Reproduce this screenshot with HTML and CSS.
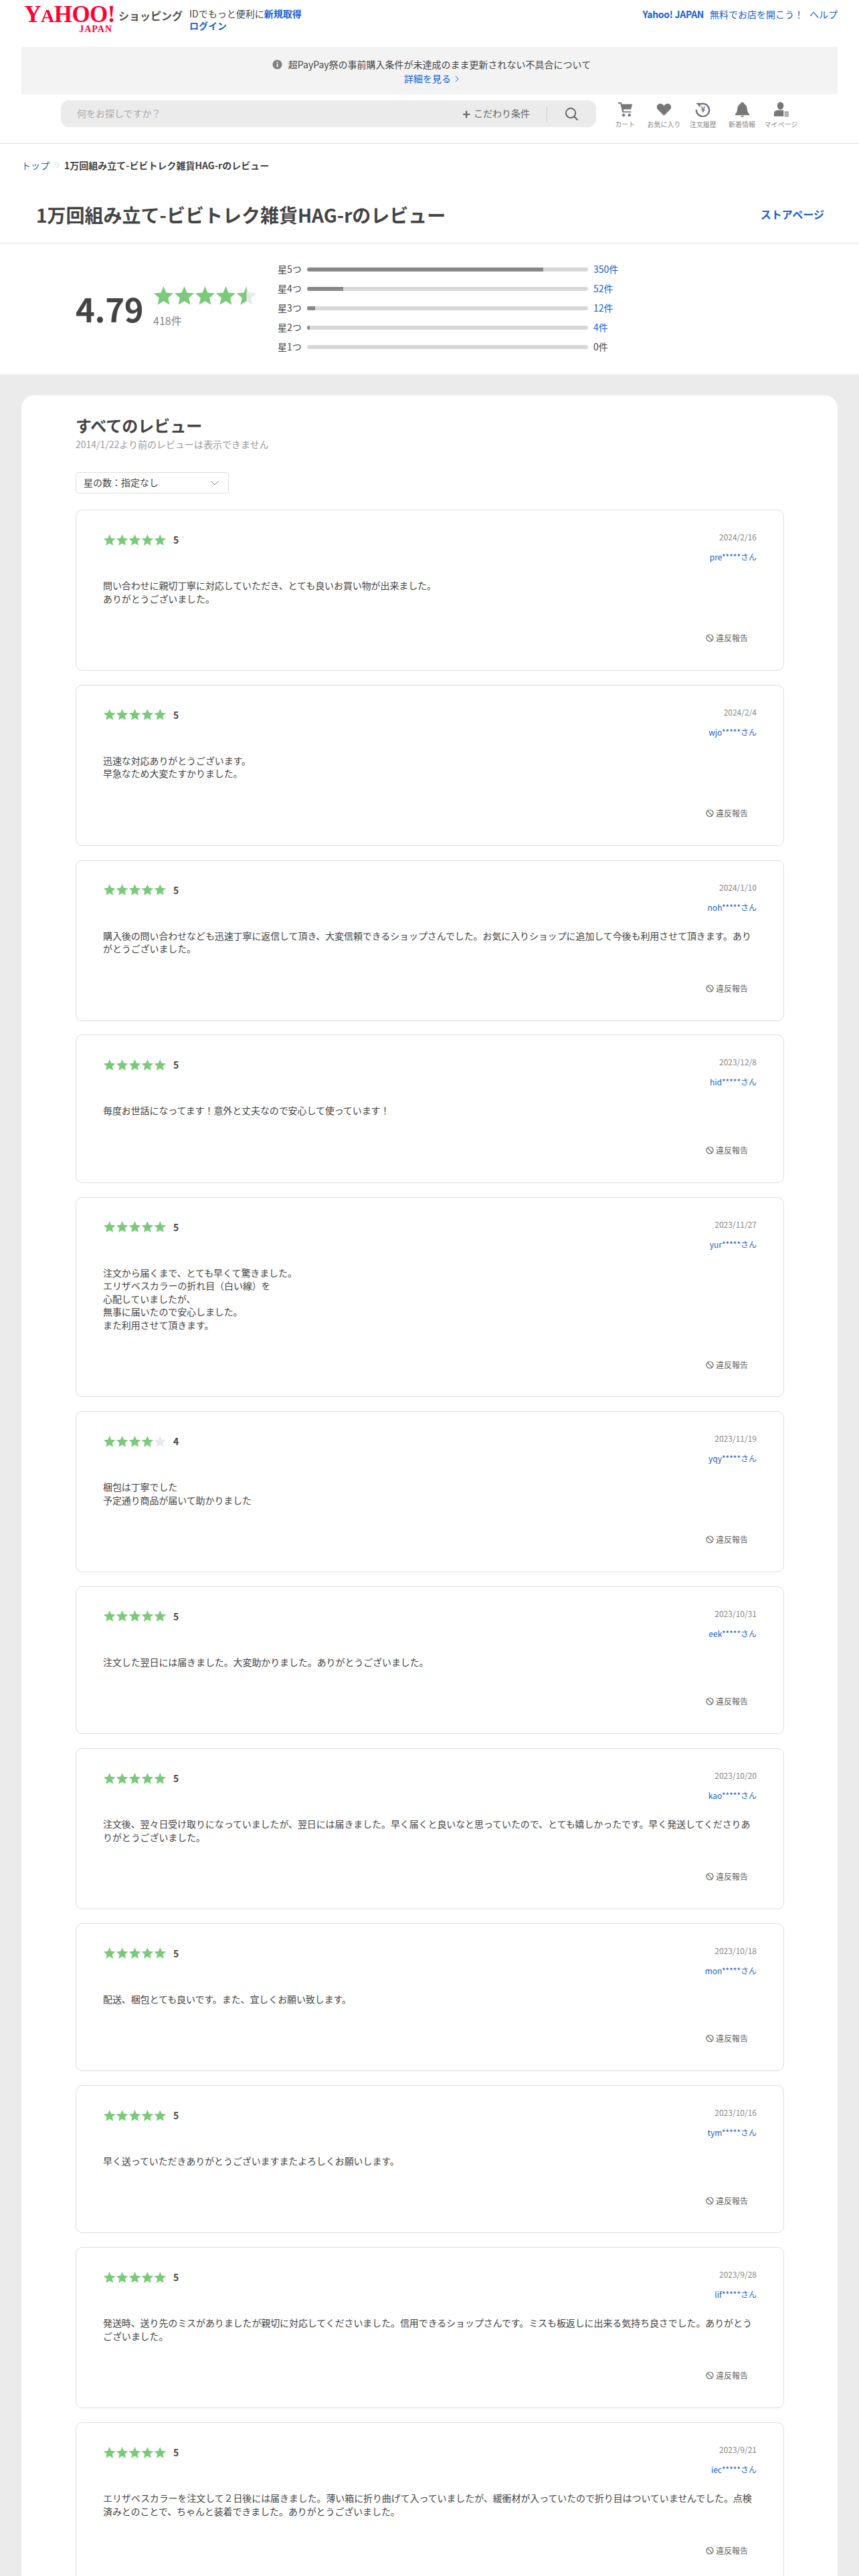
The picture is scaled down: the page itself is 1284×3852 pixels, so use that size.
FILE: index.html
```html
<!DOCTYPE html>
<html lang="ja">
<head>
    <meta charset="UTF-8">
    <title>1万回組み立て-ビビトレク雑貨HAG-rのレビュー</title>
    <link rel="stylesheet" href="styles.css">
</head>
<body>

<svg class="defs" aria-hidden="true">
    <symbol id="stars-5" viewBox="0 0 100 18">
        <path class="star-on" d="M10 0 12.6 6.2 19.4 6.8 14.3 11.2 15.8 17.8 10 14.3 4.2 17.8 5.7 11.2 .6 6.8 7.4 6.2Z"/>
        <path class="star-on" d="M30 0 32.6 6.2 39.4 6.8 34.3 11.2 35.8 17.8 30 14.3 24.2 17.8 25.7 11.2 20.6 6.8 27.4 6.2Z"/>
        <path class="star-on" d="M50 0 52.6 6.2 59.4 6.8 54.3 11.2 55.8 17.8 50 14.3 44.2 17.8 45.7 11.2 40.6 6.8 47.4 6.2Z"/>
        <path class="star-on" d="M70 0 72.6 6.2 79.4 6.8 74.3 11.2 75.8 17.8 70 14.3 64.2 17.8 65.7 11.2 60.6 6.8 67.4 6.2Z"/>
        <path class="star-on" d="M90 0 92.6 6.2 99.4 6.8 94.3 11.2 95.8 17.8 90 14.3 84.2 17.8 85.7 11.2 80.6 6.8 87.4 6.2Z"/>
    </symbol>
    <symbol id="stars-4" viewBox="0 0 100 18">
        <path class="star-on" d="M10 0 12.6 6.2 19.4 6.8 14.3 11.2 15.8 17.8 10 14.3 4.2 17.8 5.7 11.2 .6 6.8 7.4 6.2Z"/>
        <path class="star-on" d="M30 0 32.6 6.2 39.4 6.8 34.3 11.2 35.8 17.8 30 14.3 24.2 17.8 25.7 11.2 20.6 6.8 27.4 6.2Z"/>
        <path class="star-on" d="M50 0 52.6 6.2 59.4 6.8 54.3 11.2 55.8 17.8 50 14.3 44.2 17.8 45.7 11.2 40.6 6.8 47.4 6.2Z"/>
        <path class="star-on" d="M70 0 72.6 6.2 79.4 6.8 74.3 11.2 75.8 17.8 70 14.3 64.2 17.8 65.7 11.2 60.6 6.8 67.4 6.2Z"/>
        <path class="star-off" d="M90 0 92.6 6.2 99.4 6.8 94.3 11.2 95.8 17.8 90 14.3 84.2 17.8 85.7 11.2 80.6 6.8 87.4 6.2Z"/>
    </symbol>
    <symbol id="stars-half" viewBox="0 0 100 18">
        <path class="star-on" d="M10 0 12.6 6.2 19.4 6.8 14.3 11.2 15.8 17.8 10 14.3 4.2 17.8 5.7 11.2 .6 6.8 7.4 6.2Z"/>
        <path class="star-on" d="M30 0 32.6 6.2 39.4 6.8 34.3 11.2 35.8 17.8 30 14.3 24.2 17.8 25.7 11.2 20.6 6.8 27.4 6.2Z"/>
        <path class="star-on" d="M50 0 52.6 6.2 59.4 6.8 54.3 11.2 55.8 17.8 50 14.3 44.2 17.8 45.7 11.2 40.6 6.8 47.4 6.2Z"/>
        <path class="star-on" d="M70 0 72.6 6.2 79.4 6.8 74.3 11.2 75.8 17.8 70 14.3 64.2 17.8 65.7 11.2 60.6 6.8 67.4 6.2Z"/>
        <path class="star-off" d="M90 0 92.6 6.2 99.4 6.8 94.3 11.2 95.8 17.8 90 14.3 84.2 17.8 85.7 11.2 80.6 6.8 87.4 6.2Z"/>
        <path class="star-on" d="M90 0V14.3L84.2 17.8 85.7 11.2 80.6 6.8 87.4 6.2Z"/>
    </symbol>
    <symbol id="ban" viewBox="0 0 12 12">
        <circle cx="6" cy="6" r="5" fill="none" stroke="#666" stroke-width="1.2"/>
        <path d="M2.6 2.4 9.4 9.6" stroke="#666" stroke-width="1.2"/>
    </symbol>
</svg>

<div class="page">

<header class="site-header">
    <div class="top-row">
        <a class="logo">
            <span class="logo-yahoo">Y<small>A</small>HOO!</span>
            <span class="logo-japan">JAPAN</span>
        </a>
        <span class="logo-service">ショッピング</span>
        <div class="login-box">
            <div>IDでもっと便利に<a class="strong-link">新規取得</a></div>
            <div><a class="strong-link">ログイン</a></div>
        </div>
        <nav class="top-links">
            <a class="strong-link">Yahoo! JAPAN</a>
            <a>無料でお店を開こう！</a>
            <a>ヘルプ</a>
        </nav>
    </div>

    <div class="notice">
        <div class="notice-line">
            <svg class="notice-icon" viewBox="0 0 16 16"><circle cx="8" cy="8" r="7.5" fill="#808080"/><rect x="7" y="7" width="2.2" height="5" fill="#f3f3f3"/><rect x="7" y="3.8" width="2.2" height="2" fill="#f3f3f3"/></svg>
            超PayPay祭の事前購入条件が未達成のまま更新されない不具合について
        </div>
        <a class="notice-link">詳細を見る<svg class="chevron" viewBox="0 0 6 10"><path d="M1 1 5 5 1 9" fill="none" stroke="#1660cf"/></svg></a>
    </div>

    <div class="search-row">
        <div class="search-box">
            <span class="search-placeholder">何をお探しですか？</span>
            <span class="search-more"><b class="plus">+</b>こだわり条件</span>
            <span class="search-sep"></span>
            <svg class="search-icon" viewBox="0 0 22 22"><circle cx="9.5" cy="9.5" r="7.5" fill="none" stroke="#555" stroke-width="1.8"/><path d="M15 15 20.5 20.5" stroke="#555" stroke-width="2"/></svg>
        </div>
        <ul class="user-nav">
            <li>
                <svg viewBox="0 0 24 24"><path d="M1 1H6L7 4H23L21 12H9L9.6 15H21V17H7.6L4.6 3H1Z" fill="#777"/><path d="M7 5H22.5L20.6 11.5H8.4Z" fill="#777"/><circle cx="9.5" cy="21" r="2.3" fill="#777"/><circle cx="18.5" cy="21" r="2.3" fill="#777"/></svg>
                カート
            </li>
            <li>
                <svg viewBox="0 0 24 24"><path d="M12 22 2.4 12.2C-.6 8.8 1 3 6.2 3 8.8 3 10.8 4.4 12 6.4 13.2 4.4 15.2 3 17.8 3 23 3 24.6 8.8 21.6 12.2Z" fill="#777"/></svg>
                お気に入り
            </li>
            <li>
                <svg viewBox="0 0 24 24"><path d="M5.4 5.6A10 10 0 1 1 2 12.5" fill="none" stroke="#777" stroke-width="2.6"/><path d="M1.5 2.2 8.5 2 7.8 8.8Z" fill="#777"/><text x="12.4" y="17" class="yen-mark">¥</text></svg>
                注文履歴
            </li>
            <li>
                <svg viewBox="0 0 24 24"><path d="M12 1C14 1 15 2.2 15.3 3.8 18.4 5 19.4 8 19.6 11.5 19.8 15 20.8 17.4 23 19.4V21H1V19.4C3.2 17.4 4.2 15 4.4 11.5 4.6 8 5.6 5 8.7 3.8 9 2.2 10 1 12 1Z" fill="#777"/><path d="M9.8 22H14.2C14 23.2 13.2 24 12 24 10.8 24 10 23.2 9.8 22Z" fill="#777"/></svg>
                新着情報
            </li>
            <li>
                <svg viewBox="0 0 24 24"><ellipse cx="11" cy="6.5" rx="5" ry="6" fill="#777"/><path d="M1 23V18C1 15 4 13.6 7 13.4H15C15.8 13.5 16 14 16 14.6V23Z" fill="#777"/><rect x="17.5" y="15.5" width="6.5" height="1.7" fill="#777"/><rect x="17.5" y="18.5" width="6.5" height="1.7" fill="#777"/><rect x="17.5" y="21.5" width="6.5" height="1.7" fill="#777"/></svg>
                マイページ
            </li>
        </ul>
    </div>
</header>

<div class="breadcrumb">
    <a>トップ</a>
    <svg class="crumb-sep" viewBox="0 0 6 12"><path d="M.5 1 5.5 6 .5 11" fill="none" stroke="#ccc"/></svg>
    <b>1万回組み立て-ビビトレク雑貨HAG-rのレビュー</b>
</div>

<div class="title-row">
    <h1>1万回組み立て-ビビトレク雑貨HAG-rのレビュー</h1>
    <a class="store-link">ストアページ</a>
</div>

<section class="summary">
    <div class="score">4.79</div>
    <div class="score-side">
        <svg class="stars-big"><use href="#stars-half"/></svg>
        <div class="score-count">418件</div>
    </div>
    <div class="bars">
        <div class="bar-row"><span class="bar-label">星5つ</span><div class="bar-track"><div class="bar-fill" style="width: 84%"></div></div><a class="bar-count">350件</a></div>
        <div class="bar-row"><span class="bar-label">星4つ</span><div class="bar-track"><div class="bar-fill" style="width: 12.9%"></div></div><a class="bar-count">52件</a></div>
        <div class="bar-row"><span class="bar-label">星3つ</span><div class="bar-track"><div class="bar-fill" style="width: 2.9%"></div></div><a class="bar-count">12件</a></div>
        <div class="bar-row"><span class="bar-label">星2つ</span><div class="bar-track"><div class="bar-fill" style="width: 1%"></div></div><a class="bar-count">4件</a></div>
        <div class="bar-row"><span class="bar-label">星1つ</span><div class="bar-track"></div><span class="bar-count zero">0件</span></div>
    </div>
</section>

<main class="reviews-bg">
    <div class="reviews-panel">
        <h2>すべてのレビュー</h2>
        <p class="reviews-note">2014/1/22より前のレビューは表示できません</p>
        <div class="star-select">
            星の数：指定なし
            <svg viewBox="0 0 12 7"><path d="M.5 .5 6 6 11.5 .5" fill="none" stroke="#777"/></svg>
        </div>

        <div class="review-list">
            <article class="review">
                <div class="review-head">
                    <div class="review-rate"><svg class="stars-small"><use href="#stars-5"/></svg><b>5</b></div>
                    <div class="review-meta"><div class="review-date">2024/2/16</div><a class="review-user">pre*****さん</a></div>
                </div>
                <p class="review-text">問い合わせに親切丁寧に対応していただき、とても良いお買い物が出来ました。<br>ありがとうございました。</p>
                <a class="report"><svg><use href="#ban"/></svg>違反報告</a>
            </article>

            <article class="review">
                <div class="review-head">
                    <div class="review-rate"><svg class="stars-small"><use href="#stars-5"/></svg><b>5</b></div>
                    <div class="review-meta"><div class="review-date">2024/2/4</div><a class="review-user">wjo*****さん</a></div>
                </div>
                <p class="review-text">迅速な対応ありがとうございます。<br>早急なため大変たすかりました。</p>
                <a class="report"><svg><use href="#ban"/></svg>違反報告</a>
            </article>

            <article class="review">
                <div class="review-head">
                    <div class="review-rate"><svg class="stars-small"><use href="#stars-5"/></svg><b>5</b></div>
                    <div class="review-meta"><div class="review-date">2024/1/10</div><a class="review-user">noh*****さん</a></div>
                </div>
                <p class="review-text">購入後の問い合わせなども迅速丁寧に返信して頂き、大変信頼できるショップさんでした。お気に入りショップに追加して今後も利用させて頂きます。ありがとうございました。</p>
                <a class="report"><svg><use href="#ban"/></svg>違反報告</a>
            </article>

            <article class="review">
                <div class="review-head">
                    <div class="review-rate"><svg class="stars-small"><use href="#stars-5"/></svg><b>5</b></div>
                    <div class="review-meta"><div class="review-date">2023/12/8</div><a class="review-user">hid*****さん</a></div>
                </div>
                <p class="review-text">毎度お世話になってます！意外と丈夫なので安心して使っています！</p>
                <a class="report"><svg><use href="#ban"/></svg>違反報告</a>
            </article>

            <article class="review">
                <div class="review-head">
                    <div class="review-rate"><svg class="stars-small"><use href="#stars-5"/></svg><b>5</b></div>
                    <div class="review-meta"><div class="review-date">2023/11/27</div><a class="review-user">yur*****さん</a></div>
                </div>
                <p class="review-text">注文から届くまで、とても早くて驚きました。<br>エリザベスカラーの折れ目（白い線）を<br>心配していましたが、<br>無事に届いたので安心しました。<br>また利用させて頂きます。</p>
                <a class="report"><svg><use href="#ban"/></svg>違反報告</a>
            </article>

            <article class="review">
                <div class="review-head">
                    <div class="review-rate"><svg class="stars-small"><use href="#stars-4"/></svg><b>4</b></div>
                    <div class="review-meta"><div class="review-date">2023/11/19</div><a class="review-user">yqy*****さん</a></div>
                </div>
                <p class="review-text">梱包は丁寧でした<br>予定通り商品が届いて助かりました</p>
                <a class="report"><svg><use href="#ban"/></svg>違反報告</a>
            </article>

            <article class="review">
                <div class="review-head">
                    <div class="review-rate"><svg class="stars-small"><use href="#stars-5"/></svg><b>5</b></div>
                    <div class="review-meta"><div class="review-date">2023/10/31</div><a class="review-user">eek*****さん</a></div>
                </div>
                <p class="review-text">注文した翌日には届きました。大変助かりました。ありがとうございました。</p>
                <a class="report"><svg><use href="#ban"/></svg>違反報告</a>
            </article>

            <article class="review">
                <div class="review-head">
                    <div class="review-rate"><svg class="stars-small"><use href="#stars-5"/></svg><b>5</b></div>
                    <div class="review-meta"><div class="review-date">2023/10/20</div><a class="review-user">kao*****さん</a></div>
                </div>
                <p class="review-text">注文後、翌々日受け取りになっていましたが、翌日には届きました。早く届くと良いなと思っていたので、とても嬉しかったです。早く発送してくださりありがとうございました。</p>
                <a class="report"><svg><use href="#ban"/></svg>違反報告</a>
            </article>

            <article class="review">
                <div class="review-head">
                    <div class="review-rate"><svg class="stars-small"><use href="#stars-5"/></svg><b>5</b></div>
                    <div class="review-meta"><div class="review-date">2023/10/18</div><a class="review-user">mon*****さん</a></div>
                </div>
                <p class="review-text">配送、梱包とても良いです。また、宜しくお願い致します。</p>
                <a class="report"><svg><use href="#ban"/></svg>違反報告</a>
            </article>

            <article class="review">
                <div class="review-head">
                    <div class="review-rate"><svg class="stars-small"><use href="#stars-5"/></svg><b>5</b></div>
                    <div class="review-meta"><div class="review-date">2023/10/16</div><a class="review-user">tym*****さん</a></div>
                </div>
                <p class="review-text">早く送っていただきありがとうございますまたよろしくお願いします。</p>
                <a class="report"><svg><use href="#ban"/></svg>違反報告</a>
            </article>

            <article class="review">
                <div class="review-head">
                    <div class="review-rate"><svg class="stars-small"><use href="#stars-5"/></svg><b>5</b></div>
                    <div class="review-meta"><div class="review-date">2023/9/28</div><a class="review-user">lif*****さん</a></div>
                </div>
                <p class="review-text">発送時、送り先のミスがありましたが親切に対応してくださいました。信用できるショップさんです。ミスも板返しに出来る気持ち良さでした。ありがとうございました。</p>
                <a class="report"><svg><use href="#ban"/></svg>違反報告</a>
            </article>

            <article class="review">
                <div class="review-head">
                    <div class="review-rate"><svg class="stars-small"><use href="#stars-5"/></svg><b>5</b></div>
                    <div class="review-meta"><div class="review-date">2023/9/21</div><a class="review-user">iec*****さん</a></div>
                </div>
                <p class="review-text">エリザベスカラーを注文して２日後には届きました。薄い箱に折り曲げて入っていましたが、緩衝材が入っていたので折り目はついていませんでした。点検済みとのことで、ちゃんと装着できました。ありがとうございました。</p>
                <a class="report"><svg><use href="#ban"/></svg>違反報告</a>
            </article>
        </div>
    </div>
</main>

</div>

</body>
</html>
```

FILE: styles.css
```css
body {
    font-family: "Noto Sans CJK JP", "Noto Sans", sans-serif;
    font-size: 14px;
    line-height: 1.4;
    margin: 0;
    color: #444;
    background-color: #fff;
}
a {
    color: #1660cf;
}
h1, h2, p, ul {
    margin: 0;
    padding: 0;
}
.defs {
    display: block;
    width: 0;
    height: 0;
}
.star-on {
    fill: #7bc97b;
}
.star-off {
    fill: #e8e8e8;
}
.page {
    height: 3852px;
    overflow: hidden;
}

/* header */
.site-header {
    border-bottom: 1px solid #ddd;
    padding: 0 32px 21px;
}
.top-row {
    display: flex;
    height: 70px;
}
.logo {
    display: flex;
    flex-direction: column;
    align-items: flex-end;
    width: 136px;
    margin: 9px 0 0 4px;
    font-family: "Liberation Serif", serif;
    font-weight: bold;
    color: #f03;
}
.logo-yahoo {
    font-size: 35px;
    line-height: 26px;
    letter-spacing: -.5px;
    white-space: nowrap;
}
.logo-yahoo small {
    font-size: 28px;
}
.logo-japan {
    font-size: 14px;
    line-height: 14px;
    margin-right: 4px;
    letter-spacing: 1px;
}
.logo-service {
    margin: 13px 0 0 5px;
    font-size: 16px;
    font-weight: bold;
    line-height: 20px;
    color: #555;
}
.login-box {
    margin: 12px 0 0 10px;
    line-height: 17.5px;
}
.strong-link {
    font-weight: bold;
}
.top-links {
    display: flex;
    gap: 9px;
    margin: 12px 0 0 auto;
    line-height: 18px;
    height: 18px;
}
.top-links .strong-link {
    letter-spacing: -.3px;
}
.notice {
    height: 71px;
    box-sizing: border-box;
    padding: 16px 0 0 6px;
    background-color: #f3f3f3;
    text-align: center;
    line-height: 21px;
}
.notice-line {
    display: flex;
    justify-content: center;
    align-items: center;
    gap: 9px;
}
.notice-icon {
    width: 15px;
    height: 15px;
}
.notice-link {
    display: inline-flex;
    align-items: center;
    gap: 6px;
}
.chevron {
    width: 6px;
    height: 10px;
}
.search-row {
    display: flex;
    margin: 9px 0 0 59px;
}
.search-box {
    display: flex;
    align-items: center;
    width: 800px;
    height: 40px;
    border-radius: 12px;
    background-color: #ebebeb;
    box-sizing: border-box;
    padding: 0 26px 0 24px;
}
.search-placeholder {
    color: #aaa;
}
.search-more {
    margin-left: auto;
    color: #666;
    display: flex;
    align-items: center;
}
.plus {
    font-size: 20px;
    line-height: 20px;
    margin-right: 5px;
}
.search-sep {
    width: 1px;
    height: 25px;
    margin: 0 26px 0 25px;
    background-color: #ccc;
}
.search-icon {
    width: 21px;
    height: 21px;
}
.user-nav {
    display: flex;
    list-style: none;
    margin-left: 14px;
}
.user-nav li {
    width: 58.3px;
    display: flex;
    flex-direction: column;
    align-items: center;
    font-size: 10px;
    line-height: 14px;
    color: #888;
    white-space: nowrap;
}
.user-nav svg {
    width: 23px;
    height: 23px;
    margin: 2px 0 4px;
}
.yen-mark {
    font-size: 12px;
    font-weight: bold;
    fill: #777;
    text-anchor: middle;
}

/* title */
.breadcrumb {
    display: flex;
    align-items: center;
    padding: 22px 32px 1px;
    line-height: 20px;
}
.crumb-sep {
    width: 6px;
    height: 12px;
    margin: 0 7px 0 9px;
}
.breadcrumb b {
    color: #444;
}
.title-row {
    display: flex;
    justify-content: space-between;
    align-items: center;
    padding: 22px 52px 2px 54px;
    height: 81px;
    border-bottom: 1px solid #ddd;
}
h1 {
    font-size: 28px;
    line-height: 40px;
    color: #444;
}
.store-link {
    font-size: 16px;
    font-weight: bold;
}

/* summary */
.summary {
    display: flex;
    align-items: center;
    height: 196px;
    box-sizing: border-box;
    padding-left: 113px;
}
.score {
    width: 116px;
    margin-top: -2px;
    font-size: 49px;
    font-weight: bold;
    line-height: 60px;
    letter-spacing: -.3px;
    color: #444;
}
.stars-big {
    display: block;
    width: 155px;
    height: 28px;
}
.score-count {
    font-size: 16px;
    line-height: 22px;
    margin-top: 12px;
    color: #888;
}
.score-side {
    width: 186px;
    margin-top: -6px;
}
.bars {
    margin-top: -2px;
}
.bar-row {
    display: flex;
    align-items: center;
    height: 29px;
    gap: 8px;
}
.bar-label {
    width: 36px;
    white-space: nowrap;
}
.bar-track {
    width: 420px;
    height: 6px;
    border-radius: 3px;
    overflow: hidden;
    background-color: #d8d8d8;
}
.bar-fill {
    height: 6px;
    background-color: #888;
}
.bar-count.zero {
    color: #444;
}

/* reviews */
.reviews-bg {
    background-color: #ebebeb;
    padding: 31px 32px 0;
}
.reviews-panel {
    background-color: #fff;
    border-radius: 20px 20px 0 0;
    padding: 28px 80px 40px 81px;
}
h2 {
    font-size: 24px;
    line-height: 34px;
    color: #444;
}
.reviews-note {
    margin-top: 1px;
    line-height: 20px;
    color: #999;
}
.star-select {
    display: flex;
    justify-content: space-between;
    align-items: center;
    width: 229px;
    height: 32px;
    box-sizing: border-box;
    margin-top: 32px;
    padding: 0 14px 0 11px;
    border: 1px solid #ddd;
    border-radius: 4px;
}
.star-select svg {
    width: 12px;
    height: 7px;
}
.review-list {
    display: flex;
    flex-direction: column;
    gap: 20.8px;
    margin-top: 24px;
}
.review {
    display: flex;
    flex-direction: column;
    padding: 34px 40px 38.8px;
    border: 1px solid #ddd;
    border-radius: 10px;
}
.review-head {
    display: flex;
    justify-content: space-between;
}
.review-rate {
    display: flex;
    align-items: center;
    height: 20px;
    gap: 10px;
}
.review-rate b {
    line-height: 20px;
}
.stars-small {
    display: block;
    width: 95px;
    height: 17px;
}
.review-meta {
    margin-top: -2px;
    text-align: right;
    font-size: 12px;
}
.review-date {
    line-height: 16px;
    color: #888;
}
.review-user {
    display: block;
    margin-top: 13px;
    line-height: 18px;
}
.review-text {
    margin-top: 24px;
    letter-spacing: -.1px;
}
.report {
    display: flex;
    align-items: center;
    align-self: flex-end;
    gap: 3px;
    margin: 40px 13px 0 0;
    font-size: 12px;
    line-height: 18px;
    color: #666;
}
.report svg {
    width: 12px;
    height: 12px;
}
```
